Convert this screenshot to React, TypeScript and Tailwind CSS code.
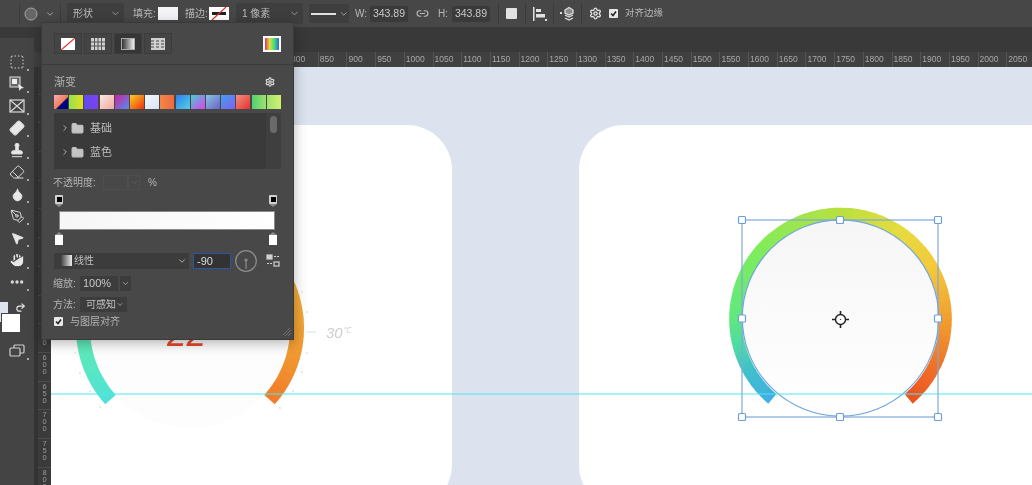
import { ChevronDown, ChevronRight, Droplet, Ellipsis, Folder, Hand, Link2, MousePointer2, PenTool, Settings, Stamp, Eraser, Bandage, SquareDashed, Undo2 } from "lucide-react";
import type { ReactNode } from "react";

const hruler = [400, 450, 500, 550, 600, 650, 700, 750, 800, 850, 900, 950, 1000, 1050, 1100, 1150, 1200, 1250, 1300, 1350, 1400, 1450, 1500, 1550, 1600, 1650, 1700, 1750, 1800, 1850, 1900, 1950, 2000, 2050];
const vruler = [100, 150, 200, 250, 300, 350, 400, 450, 500, 550, 600, 650, 700, 750, 800];

const swatches = [
  "bg-[linear-gradient(135deg,#f9a8c8,#f08050_55%,#000080_60%)]",
  "bg-[linear-gradient(90deg,#90e050,#e8e020)]",
  "bg-[linear-gradient(90deg,#5b4ef0,#8040f0)]",
  "bg-[linear-gradient(135deg,#f8e8e0,#f0a8a0)]",
  "bg-[linear-gradient(135deg,#d020a0,#5090f0)]",
  "bg-[linear-gradient(135deg,#f8d020,#f03010)]",
  "bg-[linear-gradient(135deg,#f4f6fb,#d8e4f4)]",
  "bg-[linear-gradient(90deg,#f08848,#f06840)]",
  "bg-[linear-gradient(135deg,#3080f0,#50d0e0)]",
  "bg-[linear-gradient(135deg,#40d0d0,#e040f0)]",
  "bg-[linear-gradient(135deg,#80c8e8,#7060c0)]",
  "bg-[linear-gradient(135deg,#40a0f0,#8060f0)]",
  "bg-[linear-gradient(135deg,#f09080,#e83030)]",
  "bg-[linear-gradient(90deg,#50d070,#a0e070)]",
  "bg-[linear-gradient(90deg,#a0e070,#d0f070)]",
];

const ringStops: [number, string][] = [
  [0, "#42aee4"],
  [0.07, "#3fc0cc"],
  [0.13, "#50dca0"],
  [0.18, "#60e880"],
  [0.32, "#80ec5c"],
  [0.5, "#b8e040"],
  [0.62, "#e6dc40"],
  [0.72, "#f5c83a"],
  [0.82, "#f0a030"],
  [0.92, "#f07028"],
  [1, "#ea5220"],
];

function mix(stops: [number, string][], t: number) {
  let i = 0;
  while (i < stops.length - 2 && t > stops[i + 1][0]) i++;
  const [t0, a] = stops[i];
  const [t1, b] = stops[i + 1];
  const k = (t - t0) / (t1 - t0);
  const out = [1, 3, 5].map((p) => {
    const x = parseInt(a.slice(p, p + 2), 16);
    const y = parseInt(b.slice(p, p + 2), 16);
    return Math.round(x + (y - x) * k);
  });
  return `rgb(${out.join(",")})`;
}

// deg is clockwise from straight up
function pt(cx: number, cy: number, r: number, deg: number) {
  const a = (deg * Math.PI) / 180;
  return `${(cx + r * Math.sin(a)).toFixed(2)} ${(cy - r * Math.cos(a)).toFixed(2)}`;
}

function Ring({ cx, cy, r, w, from, to, stops }: { cx: number; cy: number; r: number; w: number; from: number; to: number; stops: [number, string][] }) {
  const n = 90;
  const step = (to - from) / n;
  return (
    <g fill="none" strokeWidth={w}>
      {Array.from({ length: n }, (_, i) => {
        const a = from + step * i;
        const b = i === n - 1 ? a + step : a + step + 0.4;
        return <path key={i} d={`M${pt(cx, cy, r, a)}A${r} ${r} 0 0 1 ${pt(cx, cy, r, b)}`} stroke={mix(stops, (i + 0.5) / n)} />;
      })}
    </g>
  );
}

function Drop({ w, children, className = "" }: { w: string; children?: ReactNode; className?: string }) {
  return (
    <div className={`${w} ${className} h-[21px] flex items-center justify-between bg-[#3e3e3e] rounded-[2px] pl-[6px] pr-[3px] text-[#bdbdbd]`}>
      <span>{children}</span>
      <ChevronDown size={11} strokeWidth={1.5} />
    </div>
  );
}

function Sep({ className }: { className: string }) {
  return <div className={`${className} w-px h-[21px] bg-[#3b3b3b]`} />;
}

function OptionsBar() {
  return (
    <div className="h-[27px] shrink-0 flex items-center bg-[#474747] text-[10px] text-[#b8b8b8] whitespace-nowrap">
      <div className="w-[19px]" />
      <Sep className="" />
      <svg width="14" height="14" className="ml-[4px]" viewBox="0 0 14 14"><circle cx="7" cy="7" r="6" fill="#666" stroke="#a5a5a5" /></svg>
      <ChevronDown size={10} className="ml-[7px]" />
      <Sep className="ml-[5px]" />
      <Drop w="w-[57px]" className="ml-[6px]">形状</Drop>
      <span className="ml-[9px] w-[21px]">填充:</span>
      <div className="ml-[4px] w-[20px] h-[13px] bg-[#f4f4f6]" />
      <span className="ml-[7px] w-[20px]">描边:</span>
      <div className="ml-[4px] w-[20px] h-[13px] bg-white relative overflow-hidden">
        <div className="absolute left-[3px] right-[3px] top-[5px] h-[3px] bg-[#222]" />
        <svg width="20" height="13" className="absolute inset-0"><path d="M3 13L17 0" stroke="#e0302a" strokeWidth="1.2" /></svg>
      </div>
      <Drop w="w-[67px]" className="ml-[7px]">1 像素</Drop>
      <div className="ml-[6px] w-[40px] h-[19px] flex items-center gap-[3px] bg-[#3e3e3e] rounded-[2px] pl-[2px]">
        <div className="w-[26px] h-[2px] bg-[#e0e0e0]" />
        <ChevronDown size={10} />
      </div>
      <span className="ml-[6px] w-[15px]">W:</span>
      <div className="w-[38px] h-[16px] flex items-center justify-center bg-[#3a3a3a] rounded-[2px] text-[#c8c8c8] text-[10.5px]">343.89</div>
      <Link2 size={13} className="ml-[8px]" />
      <span className="ml-[9px] w-[14px]">H:</span>
      <div className="w-[38px] h-[16px] flex items-center justify-center bg-[#3a3a3a] rounded-[2px] text-[#c8c8c8] text-[10.5px]">343.89</div>
      <Sep className="ml-[8px]" />
      <div className="ml-[7px] w-[11px] h-[11px] bg-[#e2e2e2] rounded-[1px]" />
      <Sep className="ml-[8px]" />
      <svg width="14" height="14" className="ml-[7px]" viewBox="0 0 14 14" fill="#e0e0e0"><rect x="0" y="0" width="1.5" height="14" /><rect x="3" y="2" width="5" height="3" /><rect x="3" y="7" width="9" height="3.5" /><rect x="12" y="12" width="2" height="2" /></svg>
      <Sep className="ml-[6px]" />
      <svg width="16" height="16" className="ml-[6px]" viewBox="0 0 16 16" fill="none" stroke="#dcdcdc" strokeWidth="1.3"><path d="M5 4l4-2.5L13 4v3l-4 2-4-2z" fill="#8a8a8a" /><path d="M5 9l4 2 4-2M5 12l4 2 4-2" /><rect x="0" y="6" width="2" height="2" fill="#dcdcdc" stroke="none" /></svg>
      <Sep className="ml-[5px]" />
      <Settings size={13} className="ml-[7px] text-[#e0e0e0]" strokeWidth={2.5} />
      <div className="ml-[7px] w-[9px] h-[9px] bg-[#e8e8e8] rounded-[1px] flex items-center justify-center">
        <svg width="7" height="7" viewBox="0 0 7 7" fill="none" stroke="#222" strokeWidth="1.5"><path d="M1 3.5l2 2 3-4" /></svg>
      </div>
      <span className="ml-[7px] text-[9.5px]">对齐边缘</span>
    </div>
  );
}

function Tool({ children, mark = true }: { children: ReactNode; mark?: boolean }) {
  return (
    <div className="relative h-[22px] flex items-center justify-center text-[#dedede]">
      {children}
      {mark && <div className="absolute right-[5px] bottom-[2px] w-[2px] h-[2px] bg-[#aaa]" />}
    </div>
  );
}

function Toolbar() {
  return (
    <div className="w-[34px] shrink-0 bg-[#393939] pt-[11px] flex flex-col">
      <div className="flex-1 bg-[#444444] pt-[13px] flex flex-col">
        <Tool><SquareDashed size={16} strokeWidth={1.4} /></Tool>
        <Tool>
          <svg width="16" height="16" viewBox="0 0 16 16"><rect x="1" y="1" width="10" height="10" fill="#666" stroke="#ddd" /><rect x="3" y="3" width="5" height="5" fill="#eee" /><path d="M9 8l6 4-3 .6L10.5 15z" fill="#eee" /></svg>
        </Tool>
        <Tool>
          <svg width="16" height="14" viewBox="0 0 16 14" fill="none" stroke="#d8d8d8" strokeWidth="1.2"><rect x="1" y="1" width="14" height="12" /><path d="M1 1l14 12M15 1L1 13" /></svg>
        </Tool>
        <Tool><Bandage size={16} fill="#e8e8e8" className="-rotate-45" strokeWidth={1.5} /></Tool>
        <Tool><Stamp size={16} fill="#e8e8e8" strokeWidth={1.5} /></Tool>
        <Tool><Eraser size={16} strokeWidth={1.5} /></Tool>
        <Tool><Droplet size={15} fill="#e8e8e8" strokeWidth={1.5} /></Tool>
        <Tool><PenTool size={15} strokeWidth={1.5} /></Tool>
        <Tool><MousePointer2 size={15} fill="#e8e8e8" strokeWidth={1.5} /></Tool>
        <Tool><Hand size={16} fill="#e8e8e8" strokeWidth={1.5} stroke="#444" /></Tool>
        <Tool><Ellipsis size={16} strokeWidth={3} /></Tool>
        <div className="relative h-[31px] mt-[9px]">
          <div className="absolute left-0 top-0 w-[8px] h-[20px] bg-[#dce3ee]" />
          <div className="absolute left-[1px] top-[11px] w-[20px] h-[20px] bg-white border border-[#444]" />
          <Undo2 size={11} strokeWidth={2.5} className="absolute left-[15px] top-0 text-[#e8e8e8] -scale-x-100" />
        </div>
        <div className="mt-[7px]">
          <Tool>
            <svg width="16" height="14" viewBox="0 0 16 14" fill="none" stroke="#cfcfcf" strokeWidth="1.2"><rect x="5" y="1" width="10" height="8" rx="1" /><rect x="1" y="4" width="10" height="8" rx="1" fill="#444" /></svg>
          </Tool>
        </div>
      </div>
    </div>
  );
}

function HRuler() {
  return (
    <div className="h-[15px] shrink-0 flex overflow-hidden bg-[#404040] pl-[25.6px] text-[8.5px] leading-[15px] text-[#a8a8a8]">
      {hruler.map((v) => (
        <div key={v} className="w-[28.7px] shrink-0 border-l border-[#555] pl-[1px]">{v}</div>
      ))}
    </div>
  );
}

function VRuler() {
  return (
    <div className="w-[17px] shrink-0 flex overflow-hidden bg-[#3a3a3a]">
      <div className="w-[4px] bg-[#333]" />
      <div className="w-[13px] -mt-[2px] text-[7.5px] leading-[7px] text-[#9a9a9a] text-center">
        {vruler.map((v) => (
          <div key={v} className="h-[28.7px] border-t border-[#4c4c4c] pt-[1px]">
            {String(v).split("").map((c, i) => (
              <div key={i}>{c}</div>
            ))}
          </div>
        ))}
      </div>
    </div>
  );
}

const leftA: [number, string][] = [[0, "#50e2d6"], [0.12, "#5ee8b8"], [0.3, "#70e8a0"], [0.5, "#c0d860"], [0.75, "#f0b03a"], [0.9, "#f09830"], [1, "#f27a2a"]];

function LeftGauge() {
  // svg origin sits at page (60,260), card starts at page (51,125)
  const ticks = [[100, 407], [75, 353], [80, 373], [90, 391], [280, 408], [302, 292], [307, 312], [307, 353], [302, 372], [293, 391]];
  return (
    <>
      <svg width="270" height="170" className="absolute left-[9px] top-[135px] overflow-visible">
        <circle cx="130" cy="68" r="100" fill="#fdfdfd" />
        <Ring cx={130} cy={68} r={107} w={14} from={-132} to={132} stops={leftA} />
        {ticks.map(([x, y]) => (
          <circle key={x + "-" + y} cx={x - 60} cy={y - 260} r="1" fill="#e2e2e2" />
        ))}
        <path d="M247 72h9" stroke="#dbe6ea" strokeWidth="1.2" />
      </svg>
      <div className="absolute left-[116px] top-[190px] text-[35px] leading-[38px] italic text-[#e8492a]">22</div>
      <div className="absolute left-[275px] top-[197px] italic text-[#cfcfcf] text-[15px] leading-[18px]">
        30<span className="text-[8px] align-[5px]">℃</span>
      </div>
    </>
  );
}

function RightGauge() {
  // svg origin sits at page (710,195), card starts at page (579,125)
  const box = [[32, 25], [130, 25], [228, 25], [32, 123.5], [228, 123.5], [32, 222], [130, 222], [228, 222]];
  return (
    <svg width="260" height="240" className="absolute left-[131px] top-[70px]">
      <defs>
        <linearGradient id="disc" x1="0" y1="0" x2="0" y2="1">
          <stop offset="0" stopColor="#f6f6f7" />
          <stop offset="1" stopColor="#ffffff" />
        </linearGradient>
      </defs>
      <Ring cx={130.5} cy={124} r={105} w={12.6} from={-139.5} to={139.5} stops={ringStops} />
      <circle cx="130.5" cy="123" r="98.2" fill="url(#disc)" stroke="#6ea6da" strokeWidth="1.2" />
      <rect x="32" y="25" width="196" height="197" fill="none" stroke="#7ea9da" strokeWidth="1.2" />
      {box.map(([x, y]) => (
        <rect key={x + "-" + y} x={x - 3.5} y={y - 3.5} width="7" height="7" rx="1" fill="#fff" stroke="#6e9fd8" strokeWidth="1.2" />
      ))}
      <g fill="none" stroke="#222">
        <circle cx="130.5" cy="124.5" r="5" strokeWidth="1.4" />
        <path d="M130.5 116v4M130.5 129v4M122 124.5h4M135 124.5h4" strokeWidth="1.6" />
        <circle cx="130.5" cy="124.5" r=".6" fill="#222" stroke="none" />
      </g>
    </svg>
  );
}

function Canvas() {
  return (
    <div className="flex-1 relative overflow-hidden bg-[#dce3ee] pt-[58px] flex items-start">
      <div className="relative w-[401px] h-[385px] shrink-0 bg-white rounded-r-[45px]">
        <LeftGauge />
      </div>
      <div className="relative ml-[127px] w-[560px] h-[385px] shrink-0 bg-white rounded-[45px]">
        <RightGauge />
      </div>
      <div className="absolute left-0 right-0 top-[326px] h-[2px] bg-[#4de7ef]/50" />
    </div>
  );
}

function StopTop() {
  return (
    <div className="w-[8px] flex flex-col items-center">
      <div className="w-[8px] h-[9px] bg-[#d0d0d0] rounded-[1px] flex items-center justify-center"><div className="w-[5px] h-[5px] bg-black" /></div>
      <div className="w-0 h-0 border-x-[4px] border-x-transparent border-t-[3px] border-t-[#8a8a8a]" />
    </div>
  );
}

function StopBottom() {
  return (
    <div className="w-[8px] flex flex-col items-center">
      <div className="w-0 h-0 border-x-[4px] border-x-transparent border-b-[3px] border-b-[#8a8a8a]" />
      <div className="w-[8px] h-[10px] bg-white" />
    </div>
  );
}

function ModeBtn({ active, children }: { active?: boolean; children: ReactNode }) {
  return <div className={`w-[28px] h-[21px] flex items-center justify-center border border-[#3c3c3c] ${active ? "bg-[#363636]" : "bg-[#444]"}`}>{children}</div>;
}

function FolderRow({ label }: { label: string }) {
  return (
    <div className="h-[24px] flex items-center pl-[6px] text-[#bdbdbd]">
      <ChevronRight size={10} />
      <Folder size={13} fill="#c4c4c4" stroke="#c4c4c4" className="ml-[1px]" />
      <span className="ml-[6px] text-[11px]">{label}</span>
    </div>
  );
}

function Popover() {
  return (
    <div className="absolute left-[41px] top-[22px] w-[253px] h-[318px] bg-[#484848] border border-[#3a3a3a] shadow-[0_3px_12px_rgba(0,0,0,0.3)] text-[10px] text-[#b4b4b4] whitespace-nowrap">
      <div className="h-[42px] border-b border-[#3c3c3c] flex items-center pl-[12px] pr-[12px] gap-[2px]">
        <ModeBtn>
          <svg width="14" height="12"><rect width="14" height="12" fill="#fff" /><path d="M0 12L14 0" stroke="#e0302a" strokeWidth="1.2" /></svg>
        </ModeBtn>
        <ModeBtn>
          <svg width="14" height="12" fill="#d0d0d0"><path d="M0 0h14v12H0z" /><path d="M0 4h14M0 8h14M3.5 0v12M7 0v12M10.500 0v12" stroke="#555" /></svg>
        </ModeBtn>
        <ModeBtn active>
          <div className="w-[14px] h-[12px] bg-[linear-gradient(90deg,#333,#eee)] border border-[#aaa]" />
        </ModeBtn>
        <ModeBtn>
          <svg width="14" height="12" fill="#d0d0d0"><path d="M0 0h14v12H0z" /><path d="M0 3h14M0 6h14M0 9h14" stroke="#444" strokeDasharray="3 2" /></svg>
        </ModeBtn>
        <div className="ml-auto w-[18px] h-[16px] bg-white p-[2px]">
          <div className="w-full h-full bg-[linear-gradient(90deg,#e03060,#e0e040,#40e070,#4060e0)]" />
        </div>
      </div>
      <div className="mt-[10px] pl-[12px] pr-[14px] flex items-center justify-between h-[14px]">
        <span className="text-[11px]">渐变</span>
        <Settings size={10} strokeWidth={3} className="text-[#d8d8d8] mr-[4px]" />
      </div>
      <div className="mt-[6px] ml-[12px] w-[227px] flex justify-between">
        {swatches.map((s) => (
          <div key={s} className={`${s} w-[14px] h-[14px]`} />
        ))}
      </div>
      <div className="relative mt-[4px] ml-[12px] w-[227px] h-[56px] bg-[#3a3a3a] pt-[3px]">
        <FolderRow label="基础" />
        <FolderRow label="蓝色" />
        <div className="absolute right-0 top-0 w-[15px] h-full bg-[#3f3f3f]" />
        <div className="absolute right-[4px] top-[3px] w-[7px] h-[17px] rounded-[4px] bg-[#6a6a6a]" />
      </div>
      <div className="mt-[5px] ml-[11px] flex items-center h-[16px]">
        <span className="w-[50px]">不透明度:</span>
        <div className="w-[25px] h-[15px] border border-[#4e4e4e]" />
        <div className="w-[12px] h-[15px] border border-[#4e4e4e] flex items-center justify-center"><ChevronDown size={9} className="text-[#666]" /></div>
        <span className="ml-[8px]">%</span>
      </div>
      <div className="mt-[5px] ml-[13px] w-[222px] flex justify-between"><StopTop /><StopTop /></div>
      <div className="mt-[4px] ml-[17px] w-[216px] h-[19px] bg-[linear-gradient(90deg,#f6f6f7,#ffffff)] border border-[#8a8a8a]" />
      <div className="mt-[2px] ml-[13px] w-[222px] flex justify-between"><StopBottom /><StopBottom /></div>
      <div className="mt-[7px] ml-[12px] flex items-center h-[17px]">
        <div className="w-[135px] h-[16px] bg-[#3c3c3c] flex items-center pl-[6px] pr-[2px] text-[#c0c0c0]">
          <div className="w-[12px] h-[11px] bg-[linear-gradient(90deg,#333,#eee)]" />
          <span className="ml-[2px]">线性</span>
          <ChevronDown size={10} className="ml-auto" />
        </div>
        <div className="ml-[4px] w-[38px] h-[16px] bg-[#333] border border-[#2b56a8] rounded-[1px] pl-[3px] leading-[14px] text-[11px] text-[#dcdcdc]">-90</div>
        <svg width="22" height="22" className="ml-[4px]" fill="none" stroke="#8c8c8c" strokeWidth="1.2"><circle cx="11" cy="11" r="10.300" /><path d="M11 10v9" /><circle cx="11" cy="10" r="1" fill="#aaa" /></svg>
        <svg width="14" height="13" className="ml-[9px]" fill="none" stroke="#cfcfcf" strokeWidth="1.2"><rect x="1" y="1" width="5" height="4" fill="#cfcfcf" /><rect x="8" y="8" width="5" height="4" /><path d="M8 2.500h5M1 9.500h5" strokeDasharray="2 1" /></svg>
      </div>
      <div className="mt-[7px] ml-[11px] flex items-center h-[15px]">
        <span className="w-[27px]">缩放:</span>
        <div className="w-[38px] h-[15px] bg-[#3c3c3c] pl-[3px] leading-[15px] text-[11px] text-[#c8c8c8]">100%</div>
        <div className="ml-[2px] w-[11px] h-[15px] bg-[#3c3c3c] flex items-center justify-center"><ChevronDown size={9} /></div>
      </div>
      <div className="mt-[6px] ml-[11px] flex items-center h-[15px]">
        <span className="w-[27px]">方法:</span>
        <div className="w-[47px] h-[15px] bg-[#3c3c3c] flex items-center justify-between pl-[6px] pr-[3px] text-[#c0c0c0]">
          <span>可感知</span>
          <ChevronDown size={9} />
        </div>
      </div>
      <div className="mt-[2px] ml-[12px] flex items-center h-[14px]">
        <div className="w-[9px] h-[9px] bg-[#e8e8e8] rounded-[1px] flex items-center justify-center">
          <svg width="7" height="7" viewBox="0 0 7 7" fill="none" stroke="#222" strokeWidth="1.500"><path d="M1 3.500l2 2 3-4" /></svg>
        </div>
        <span className="ml-[7px]">与图层对齐</span>
      </div>
      <svg width="10" height="10" className="absolute right-[1px] bottom-[2px]" stroke="#6e6e6e"><path d="M1 8l7-7M3 9l6-6M6 9l3-3" /></svg>
    </div>
  );
}

export default function App() {
  return (
    <div className="relative w-[1032px] h-[485px] overflow-hidden flex flex-col bg-[#393939] font-['Liberation_Sans','Noto_Sans_CJK_SC',sans-serif] blur-[0.4px]">
      <OptionsBar />
      <div className="flex-1 min-h-0 flex">
        <Toolbar />
        <div className="flex-1 min-w-0 flex flex-col">
          <div className="h-[25px] shrink-0 bg-[#393939]" />
          <HRuler />
          <div className="flex-1 min-h-0 flex">
            <VRuler />
            <Canvas />
          </div>
        </div>
      </div>
      <Popover />
    </div>
  );
}
